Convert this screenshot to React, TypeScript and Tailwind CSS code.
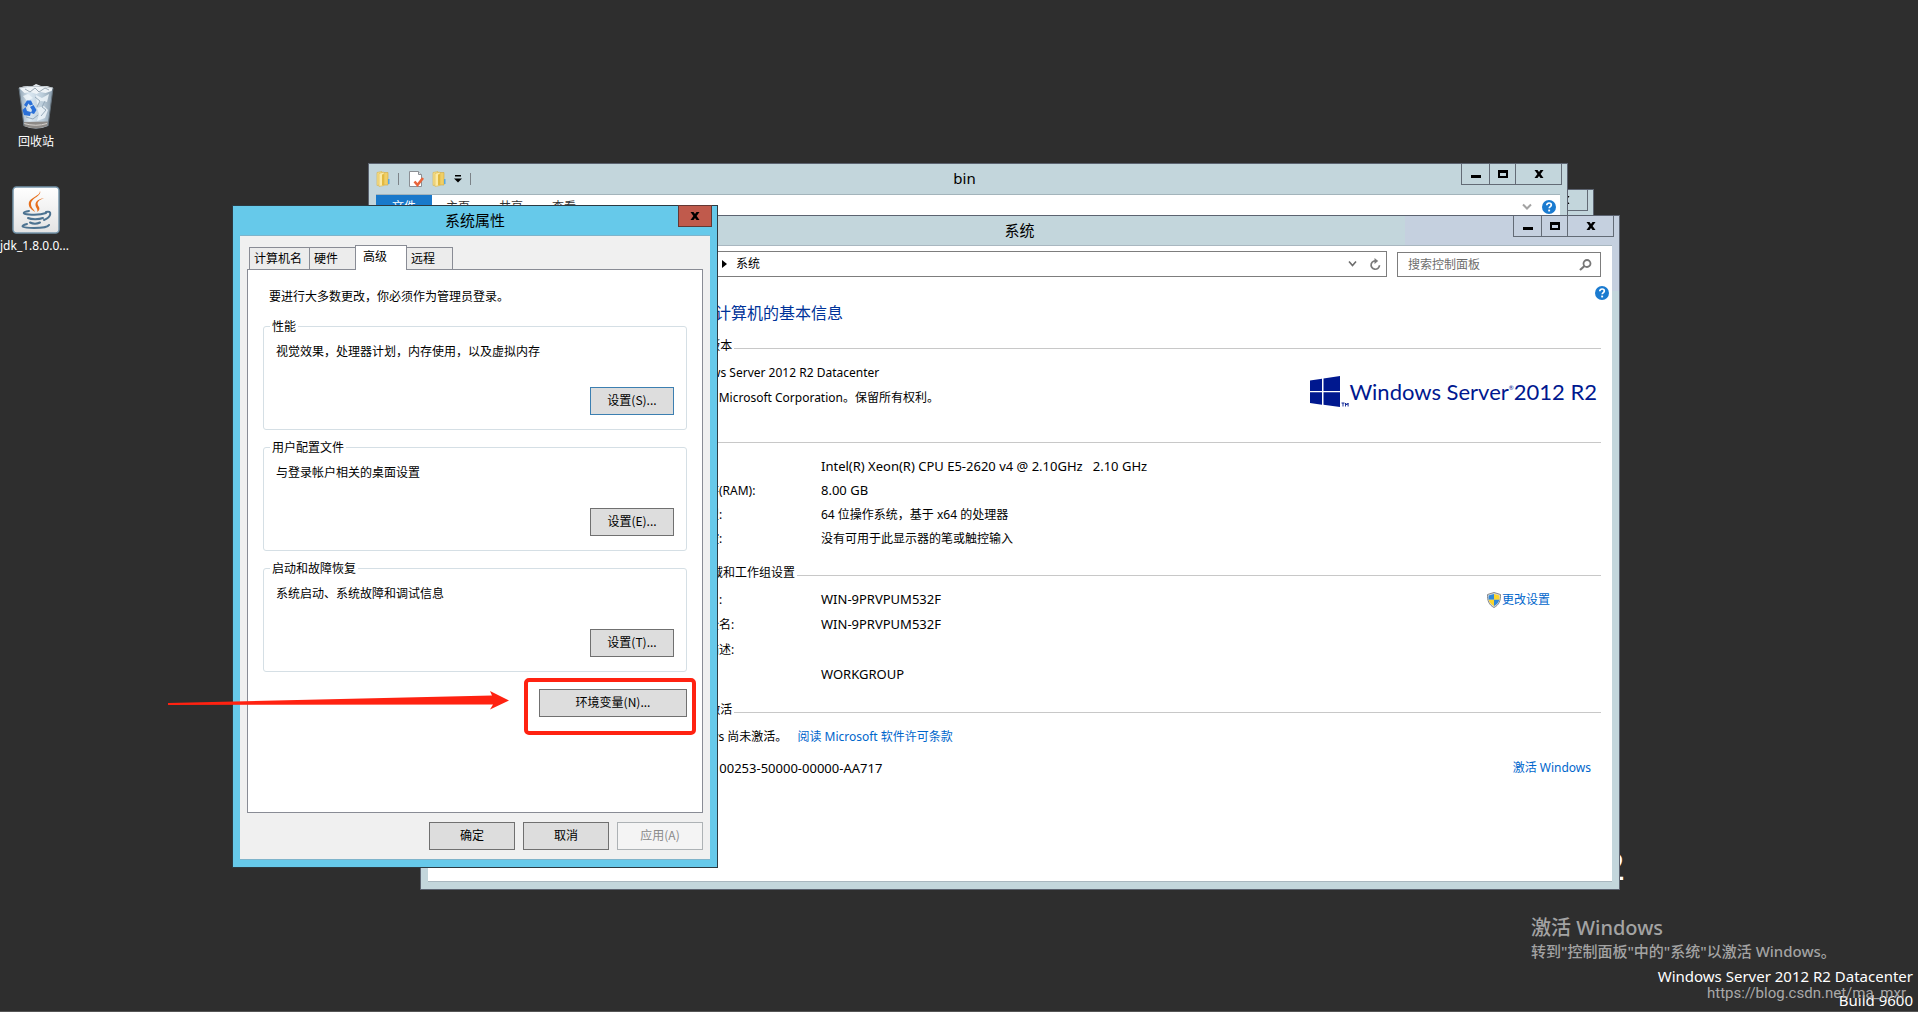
import React, { useState } from "react";

const SANS = "font-['Noto_Sans','Noto_Sans_CJK_SC',sans-serif]";
const NARROW = "font-['Noto_Sans_CJK_SC',sans-serif]";

function MinimizeGlyph() {
  return (
    <svg width="12" height="12" viewBox="0 0 12 12" aria-hidden="true">
      <path d="M1 7h10v3H1z" fill="#000" />
    </svg>
  );
}

function MaximizeGlyph() {
  return (
    <svg width="12" height="12" viewBox="0 0 12 12" aria-hidden="true">
      <path d="M1 2h10v8H1zM3 5v3h6V5z" fill="#000" fillRule="evenodd" />
    </svg>
  );
}

function CloseGlyph() {
  return (
    <svg width="12" height="12" viewBox="0 0 12 12" aria-hidden="true">
      <path d="M1.500 2h3L6 4l1.500-2h3L7.600 6l2.900 4h-3L6 8l-1.500 2h-3l2.900-4z" fill="#000" />
    </svg>
  );
}

function WindowButtons() {
  const base = "flex h-full items-center justify-center border-r border-[#636b76]";
  return (
    <div className="-mr-0.5 flex h-[21px] shrink-0 self-start border-b border-l border-[#636b76]">
      <button type="button" aria-label="最小化" className={`${base} w-7`}>
        <MinimizeGlyph />
      </button>
      <button type="button" aria-label="最大化" className={`${base} w-[26px]`}>
        <MaximizeGlyph />
      </button>
      <button type="button" aria-label="关闭" className={`${base} w-[46px]`}>
        <CloseGlyph />
      </button>
    </div>
  );
}

function HelpIcon() {
  return (
    <svg width="14" height="14" viewBox="0 0 14 14" aria-hidden="true">
      <circle cx="7" cy="7" r="7" fill="#1b7bd0" />
      <path d="M4.800 5.200C4.800 3.700 5.800 3 7.100 3s2.200.8 2.200 2c0 1.500-2.100 1.700-2.100 3.300" fill="none" stroke="#fff" strokeWidth="1.700" />
      <rect x="6.200" y="9.600" width="1.900" height="1.800" fill="#fff" />
    </svg>
  );
}

function FolderIcon() {
  return (
    <svg width="14" height="16" viewBox="0 0 14 16" aria-hidden="true">
      <path d="M1 1.500 6 .5v13L1 14.500z" fill="#f6e08c" stroke="#d9b44a" strokeWidth=".6" />
      <path d="M6 1.500h6V14H6z" fill="#f0cf66" stroke="#d1a83f" strokeWidth=".6" />
      <path d="M3 2.500 8 1v13.500l-5 1z" fill="#fbeaa5" stroke="#dcb74d" strokeWidth=".6" />
      <path d="M6 3.500l2-.6v11L6 14.600z" fill="#e2b93f" />
      <path d="M12 8h1.500v5H12z" fill="#5aa7dd" />
    </svg>
  );
}

function PropertiesIcon() {
  return (
    <svg width="15" height="16" viewBox="0 0 15 16" aria-hidden="true">
      <path d="M.5.500h9l3 3v12H.5z" fill="#fff" stroke="#8b8f94" />
      <path d="M9.500.500v3h3" fill="#dfe3e6" stroke="#8b8f94" />
      <path d="M5.500 10.500l3 3.500 5.500-7" fill="none" stroke="#e8643a" strokeWidth="2.600" />
    </svg>
  );
}

function RecycleBin() {
  return (
    <svg width="38" height="46" viewBox="0 0 38 46" aria-hidden="true">
      <defs>
        <linearGradient id="bin" x1="0" x2="1">
          <stop offset="0" stopColor="#8fa3b3" />
          <stop offset=".3" stopColor="#dbe8f2" />
          <stop offset=".7" stopColor="#b9cbd9" />
          <stop offset="1" stopColor="#8598a8" />
        </linearGradient>
      </defs>
      <path d="M2 4h34l-5 38q-12 5-24 0z" fill="url(#bin)" />
      <path d="M6 38l25-.5-.6 4.500q-11.500 4.500-23.500 0z" fill="#8d8a87" />
      <path d="M7 39.500q12 3.500 23 0" stroke="#d6d3cf" fill="none" />
      <path d="M2 4q4-2 9-2l3 1 5-3 5 2 6 0 6 2-1.500 3-6 2-5-1-4 2-6-2-6 1z" fill="#eef3f7" />
      <path d="M8 5l5 3 5-4 4 4 6-4 4 2" fill="none" stroke="#9aa9b5" />
      <path d="M19 11l6 3 7-4-2 8-6-1-4 4zM20 24l7-2 4 4-3 8-8 3 2-7zM6 12l5-2 5 4-6 3z" fill="#edf4f9" opacity=".85" />
      <path d="M18 13l5 4-3 6M28 17l-3 6 4 3-5 6M9 33l7 2 5-4" fill="none" stroke="#8ea4b6" strokeWidth=".9" />
      <path d="M7 21l3-4.500 4 0 2 4-3 1-1.500-2-2 3.500zM16.500 21l3 5-2.500 4-3-1 1-3-2-3zM13 32l-6-1-1.500-5 3-3 1.500 4 4 1z" fill="#2a70d8" />
      <path d="M2 4l5 38M36 4l-5 38" stroke="#63717c" strokeWidth="1" />
      <path d="M2 4q17-3.500 34 0" stroke="#b7c0c7" fill="none" />
    </svg>
  );
}

function JavaIcon() {
  return (
    <svg width="48" height="48" viewBox="0 0 48 48" aria-hidden="true">
      <defs>
        <linearGradient id="tile" x1="0" y1="0" x2="0" y2="1">
          <stop offset="0" stopColor="#ffffff" />
          <stop offset="1" stopColor="#e3e3e3" />
        </linearGradient>
      </defs>
      <rect x="1" y="1" width="46" height="46" rx="3.500" fill="url(#tile)" stroke="#7595ab" strokeWidth="1.500" />
      <path d="M28 5c2 5-9 7-9 13 0 4 3 5 4 8-5-3-7-6-6-10C19 11 28 10 28 5z" fill="#e76f1b" />
      <path d="M32 12c-8 3-7 6-5 9 1 2 0 4-2 5 1-2 0-3-1-5-2-5 2-8 8-9z" fill="#e76f1b" />
      <g fill="none" stroke="#4d7391" strokeWidth="2" strokeLinecap="round">
        <path d="M17 25c-7 1-7 3 0 3.500s13 0 17-1.500" />
        <path d="M34 26c6-2 6 5-2 8" />
        <path d="M16 32c3 1.500 11 1.500 15 0" />
        <path d="M18 36.500c3 1.500 7 1.500 10 0" />
        <path d="M15 38c-8 2-5 4 7 4 9 0 14-1 15-3" />
      </g>
    </svg>
  );
}

function ShieldIcon() {
  return (
    <svg width="14" height="16" viewBox="0 0 14 16" aria-hidden="true">
      <path d="M7 .5l6.500 2c.3 6-1.500 10.500-6.500 13C2 13 .2 8.500.5 2.500z" fill="#d8dadc" stroke="#85898d" />
      <path d="M7 2v5.800H1.700C1.500 6.500 1.500 5 1.700 3.500z" fill="#2f87da" />
      <path d="M7 2v5.800h5.300c.2-1.300.2-2.800 0-4.300z" fill="#fbd52c" />
      <path d="M1.700 7.800H7v6.200C4.100 12.300 2.300 10.500 1.700 7.800z" fill="#fbd52c" />
      <path d="M12.300 7.800H7v6.200c2.900-1.700 4.700-3.500 5.300-6.200z" fill="#2f87da" />
    </svg>
  );
}

function ExplorerWindow() {
  return (
    <section aria-label="bin" className="absolute left-[368px] top-[163px] flex h-[680px] w-[1200px] flex-col border border-[#5c6370] bg-[#c3d6dc] px-[7px] pb-[7px]">
      <header className="flex h-[30px] items-center">
        <div className="flex w-[150px] items-center">
          <FolderIcon />
          <span className="ml-2 h-3 w-px bg-[#7c8388]" />
          <button type="button" aria-label="属性" className="ml-2.5">
            <PropertiesIcon />
          </button>
          <button type="button" aria-label="新建文件夹" className="ml-2">
            <FolderIcon />
          </button>
          <button type="button" aria-label="自定义快速访问工具栏" className="ml-2">
            <svg width="8" height="8" viewBox="0 0 8 8" aria-hidden="true">
              <path d="M1 0h6v1.500H1zM0 3.500h8L4 7.500z" fill="#000" />
            </svg>
          </button>
          <span className="ml-2 h-3 w-px bg-[#7c8388]" />
        </div>
        <h2 className="flex-1 pb-0.5 pr-[58px] text-center text-[15px] leading-6">bin</h2>
        <WindowButtons />
      </header>
      <div className="flex flex-1 flex-col border-t border-[#a3b4bb] bg-white">
        <nav className="flex h-6 items-center text-xs text-[#333]">
          <button type="button" className="h-full w-14 bg-[#1979ca] text-white">文件</button>
          <button type="button" className="ml-3.5">主页</button>
          <button type="button" className="ml-[29px]">共享</button>
          <button type="button" className="ml-[29px]">查看</button>
          <button type="button" aria-label="展开功能区" className="ml-auto">
            <svg width="10" height="8" viewBox="0 0 10 8" aria-hidden="true">
              <path d="M1 1.500l4 4 4-4" fill="none" stroke="#a3a3a3" strokeWidth="2" />
            </svg>
          </button>
          <button type="button" aria-label="帮助" className="ml-[10px] mr-1">
            <HelpIcon />
          </button>
        </nav>
      </div>
    </section>
  );
}

function BackWindow() {
  return (
    <section aria-label="窗口" className="absolute left-[394px] top-[189px] flex h-[650px] w-[1200px] flex-col border border-[#5c6370] bg-[#c3d6dc] px-[7px]">
      <header className="flex h-[30px] justify-end">
        <WindowButtons />
      </header>
    </section>
  );
}

function SectionTitle({ children, className }: { children: React.ReactNode; className: string }) {
  return (
    <div className={`flex items-center gap-0.5 ${className}`}>
      <h3 className="shrink-0 leading-[18px]">{children}</h3>
      <span className="mt-1 h-px flex-1 bg-[#c8c8c8]" />
    </div>
  );
}

function InfoRow({ label, value, className, children }: { label: string; value: React.ReactNode; className: string; children?: React.ReactNode }) {
  return (
    <div className={`flex items-center pl-5 ${className}`}>
      <dt className="w-[150px] shrink-0">{label}</dt>
      <dd className="whitespace-pre">{value}</dd>
      {children}
    </div>
  );
}

function Latin({ children }: { children: React.ReactNode }) {
  return <span className="text-[13px]">{children}</span>;
}

function SystemWindow() {
  return (
    <section
      aria-label="系统"
      className="absolute left-[420px] top-[215px] flex h-[675px] w-[1200px] flex-col border border-[#5c6370] bg-[#c3d6dc] bg-[linear-gradient(#c5d0df,#c5d0df)] bg-[length:214px_75px] bg-right-top bg-no-repeat px-[7px] pb-[7px] text-xs"
    >
      <header className="flex h-[29px] items-center">
        <h2 className="flex-1 pb-0.5 pl-[98px] text-center text-[15px] leading-6">系统</h2>
        <WindowButtons />
      </header>
      <div className="flex-1 border-y border-[#a9b7c0] bg-white pr-[11px]">
        <div className="flex gap-2.5 pl-[100px] pt-[5px]">
          <div className="flex h-[26px] flex-1 items-center border border-[#7d7d7d]">
            <span className="ml-[193px]">
              <svg width="5" height="8" viewBox="0 0 5 8" aria-hidden="true">
                <path d="M0 0l5 4-5 4z" fill="#000" />
              </svg>
            </span>
            <span className="ml-[9px]">系统</span>
            <button type="button" aria-label="上一个位置" className="ml-auto">
              <svg width="9" height="8" viewBox="0 0 9 8" aria-hidden="true">
                <path d="M1 1.500l3.500 4L8 1.500" fill="none" stroke="#6c6c6c" strokeWidth="1.600" />
              </svg>
            </button>
            <button type="button" aria-label="刷新" className="ml-3 mr-1">
              <svg width="13" height="13" viewBox="0 0 13 13" aria-hidden="true">
                <path d="M8 3.200a4.200 4.200 0 1 0 2.500 4" fill="none" stroke="#7a7a7a" strokeWidth="1.700" />
                <path d="M5.500 0v6l3.700-3z" fill="#7a7a7a" />
              </svg>
            </button>
          </div>
          <label className="flex h-[25px] w-[204px] items-center self-end border border-[#7d7d7d] pl-2.5 pr-2">
            <input type="search" aria-label="搜索控制面板" placeholder="搜索控制面板" className="min-w-0 flex-1 bg-transparent outline-none placeholder:text-[#6d6d6d]" />
            <svg width="13" height="12" viewBox="0 0 13 12" aria-hidden="true">
              <circle cx="8" cy="4.500" r="3.500" fill="none" stroke="#777" strokeWidth="1.800" />
              <path d="M5.500 7L1 11" stroke="#777" strokeWidth="2.200" />
            </svg>
          </label>
        </div>

        <main className="pl-[223px]">
          <div className="-mr-2 flex items-start justify-between pt-2">
            <h1 className="mt-4 text-base leading-6 text-[#003399]">查看有关计算机的基本信息</h1>
            <button type="button" aria-label="帮助" className="mt-px">
              <HelpIcon />
            </button>
          </div>

          <SectionTitle className="mt-3 pl-[3px]">Windows 版本</SectionTitle>
          <div className="flex justify-between pl-6 pr-1">
            <div className="mt-[9px] leading-[18px]">
              <p>Windows Server 2012 R2 Datacenter</p>
              <p className="mt-[7px]">© 2013 Microsoft Corporation。保留所有权利。</p>
            </div>
            <div className="mt-[21px] flex h-8 items-center text-[#00188f]">
              <svg width="39" height="32" viewBox="0 0 39 32" aria-hidden="true">
                <path d="M0 4.500l12-1.700V15H0zM13.500 2.500L30 0v15H13.500zM0 16.300h12v12.400L0 27zM13.500 16.300H30V31l-16.500-2.200z" fill="#00188f" />
                <path d="M31.500 27h3M33 27v3.500M35.500 30.500V27l1.300 2 1.300-2v3.500" stroke="#00188f" strokeWidth=".9" fill="none" />
              </svg>
              <span className="whitespace-nowrap font-['Lato',sans-serif] text-[22px] leading-8">
                Windows Server<sup className="align-[7px] text-[6px] leading-none">®</sup>2012 R2
              </span>
            </div>
          </div>

          <SectionTitle className="mt-[23px]">系统</SectionTitle>
          <dl className="mt-1.5">
            <InfoRow className="h-6" label="处理器:" value={<Latin>Intel(R) Xeon(R) CPU E5-2620 v4 @ 2.10GHz   2.10 GHz</Latin>} />
            <InfoRow className="h-6" label="安装内存(RAM):" value={<Latin>8.00 GB</Latin>} />
            <InfoRow className="h-6" label="系统类型:" value="64 位操作系统，基于 x64 的处理器" />
            <InfoRow className="h-6" label="笔和触控:" value="没有可用于此显示器的笔或触控输入" />
          </dl>

          <SectionTitle className="mt-[13px]">计算机名、域和工作组设置</SectionTitle>
          <dl className="mt-[5px]">
            <InfoRow className="h-[25px]" label="计算机名:" value={<Latin>WIN-9PRVPUM532F</Latin>}>
              <dd className="ml-auto mr-[51px]">
                <a href="#change" className="flex items-center gap-px text-[#0066cc]">
                  <ShieldIcon />
                  更改设置
                </a>
              </dd>
            </InfoRow>
            <InfoRow className="h-[25px]" label="计算机全名:" value={<Latin>WIN-9PRVPUM532F</Latin>} />
            <InfoRow className="h-[25px]" label="计算机描述:" value="" />
            <InfoRow className="h-[25px]" label="工作组:" value={<Latin>WORKGROUP</Latin>} />
          </dl>

          <SectionTitle className="mt-3.5 pl-[3px]">Windows 激活</SectionTitle>
          <p className="mt-[9px] flex gap-2.5 pl-[22px] leading-[18px]">
            <span>Windows 尚未激活。</span>
            <a href="#license" className="text-[#0066cc]">阅读 Microsoft 软件许可条款</a>
          </p>
          <p className="mt-[13px] flex justify-between pl-[22px] pr-2.5 leading-[18px]">
            <span>
              产品 ID: <Latin>00253-50000-00000-AA717</Latin>
            </span>
            <a href="#activate" className="text-[#0066cc]">激活 Windows</a>
          </p>
        </main>
      </div>
    </section>
  );
}

function DialogButton({ children, className, disabled }: { children: React.ReactNode; className: string; disabled?: boolean }) {
  return (
    <button
      type="button"
      disabled={disabled}
      className={`h-7 border pb-0.5 ${NARROW} ${disabled ? "border-[#adb2b5] bg-[#f4f4f4] text-[#8a8a8a]" : "bg-[#dddddd] text-black"} ${className}`}
    >
      {children}
    </button>
  );
}

function SettingsGroup({ title, text, button, focused }: { title: string; text: string; button: string; focused?: boolean }) {
  return (
    <fieldset className="rounded-[3px] border border-[#d5dfe5]">
      <legend className="ml-1.5 px-0.5 pt-0.5 leading-[18px]">{title}</legend>
      <div className="flex flex-col px-3 pb-3.5 pt-[7px]">
        <p className="leading-[18px]">{text}</p>
        <DialogButton className={`mt-[26px] w-[84px] self-end ${focused ? "border-[#3c7fb1]" : "border-[#707070]"}`}>{button}</DialogButton>
      </div>
    </fieldset>
  );
}

const TABS = [
  { name: "计算机名", width: "w-[61px]" },
  { name: "硬件", width: "w-[47px]" },
  { name: "高级", width: "w-[52px]" },
  { name: "远程", width: "w-[47px]" },
];

function PropertiesDialog() {
  const [active, setActive] = useState("高级");
  return (
    <section role="dialog" aria-label="系统属性" className="absolute left-[232px] top-[205px] flex h-[663px] w-[486px] flex-col border border-[#2b3a42] bg-[#66c9ea] px-[7px] pb-[7px] text-xs">
      <header className="relative flex h-[29px] shrink-0 items-center justify-center">
        <h2 className="pb-0.5 text-[15px] leading-6">系统属性</h2>
        <button type="button" aria-label="关闭" className="absolute -right-0.5 -top-px flex h-[22px] w-[34px] items-center justify-center border border-[#633834] bg-[#c05a4c]">
          <CloseGlyph />
        </button>
      </header>
      <div className="flex flex-1 flex-col border-y border-[#7fb4cb] bg-[#f0f0f0] px-[7px] pb-[9px] pt-[9px]">
        <div role="tablist" className="flex h-6 items-end pl-0.5">
          {TABS.map((tab) => (
            <button
              key={tab.name}
              type="button"
              role="tab"
              aria-selected={tab.name === active}
              onClick={() => setActive(tab.name)}
              className={`${tab.width} -mr-px border border-b-0 border-[#898c95] text-left ${
                tab.name === active ? "z-10 -mb-px h-[25px] bg-white pb-0.5 pl-[7px]" : "h-[22px] bg-[#ececec] pl-1"
              }`}
            >
              {tab.name}
            </button>
          ))}
        </div>
        <div role="tabpanel" className="flex flex-1 flex-col border border-[#898c95] bg-white pl-[15px] pr-[15px] pt-[18px]">
          <p className="pl-1.5 leading-[18px]">要进行大多数更改，你必须作为管理员登录。</p>
          <div className="mt-2.5 flex flex-col gap-[7px]">
            <SettingsGroup title="性能" text="视觉效果，处理器计划，内存使用，以及虚拟内存" button="设置(S)..." focused />
            <SettingsGroup title="用户配置文件" text="与登录帐户相关的桌面设置" button="设置(E)..." />
            <SettingsGroup title="启动和故障恢复" text="系统启动、系统故障和调试信息" button="设置(T)..." />
          </div>
          <div className="relative mt-[17px] self-end">
            <DialogButton className="w-[148px] border-[#707070]">环境变量(N)...</DialogButton>
            <span className="pointer-events-none absolute -bottom-[18px] -left-[15px] -right-[9px] -top-[11px] rounded-[5px] border-4 border-[#ff2211]" />
          </div>
        </div>
        <div className="mt-[9px] flex justify-end gap-2">
          <DialogButton className="w-[86px] border-[#707070]">确定</DialogButton>
          <DialogButton className="w-[86px] border-[#707070]">取消</DialogButton>
          <DialogButton className="w-[86px]" disabled>应用(A)</DialogButton>
        </div>
      </div>
    </section>
  );
}

export default function App() {
  return (
    <div lang="zh-CN" className={`relative min-h-screen overflow-hidden border-b border-[#555] bg-[#2e2e2e] text-black ${SANS}`}>
      <div className="absolute left-0 top-[84px] flex w-[72px] flex-col items-center text-xs text-white">
        <RecycleBin />
        <span className="mt-[3px] leading-[18px]">回收站</span>
        <span className="mt-[35px]">
          <JavaIcon />
        </span>
        <span className="mt-[3px] self-start whitespace-nowrap leading-[18px]">jdk_1.8.0.0...</span>
      </div>

      <p className="absolute right-[293px] top-[838px] text-[39px] leading-[54px] text-white">Windows Server 2012 R2</p>

      <BackWindow />
      <ExplorerWindow />
      <SystemWindow />
      <PropertiesDialog />

      <svg className="pointer-events-none absolute left-[168px] top-[690px]" width="342" height="21" viewBox="0 0 342 21" aria-hidden="true">
        <path d="M0 13L324 5.500 322 1 341 10.500 322 19.500l3-5L0 15z" fill="#ff2211" />
      </svg>

      <div className="absolute right-[90px] top-[914px] w-[297px] whitespace-nowrap font-medium text-[#a3a3a3]">
        <p className="text-xl leading-7">激活 Windows</p>
        <p className="text-[15px] leading-[18px]">转到"控制面板"中的"系统"以激活 Windows。</p>
      </div>
      <div className="absolute right-[5px] top-[964px] text-right text-[15px] leading-6 text-white">
        <p>Windows Server 2012 R2 Datacenter</p>
        <p>Build 9600</p>
      </div>
      <p className="absolute right-3 top-[981px] font-['Roboto',sans-serif] text-[15px] leading-6 text-[#a9a9a9]">https://blog.csdn.net/ma_mxr</p>
    </div>
  );
}
